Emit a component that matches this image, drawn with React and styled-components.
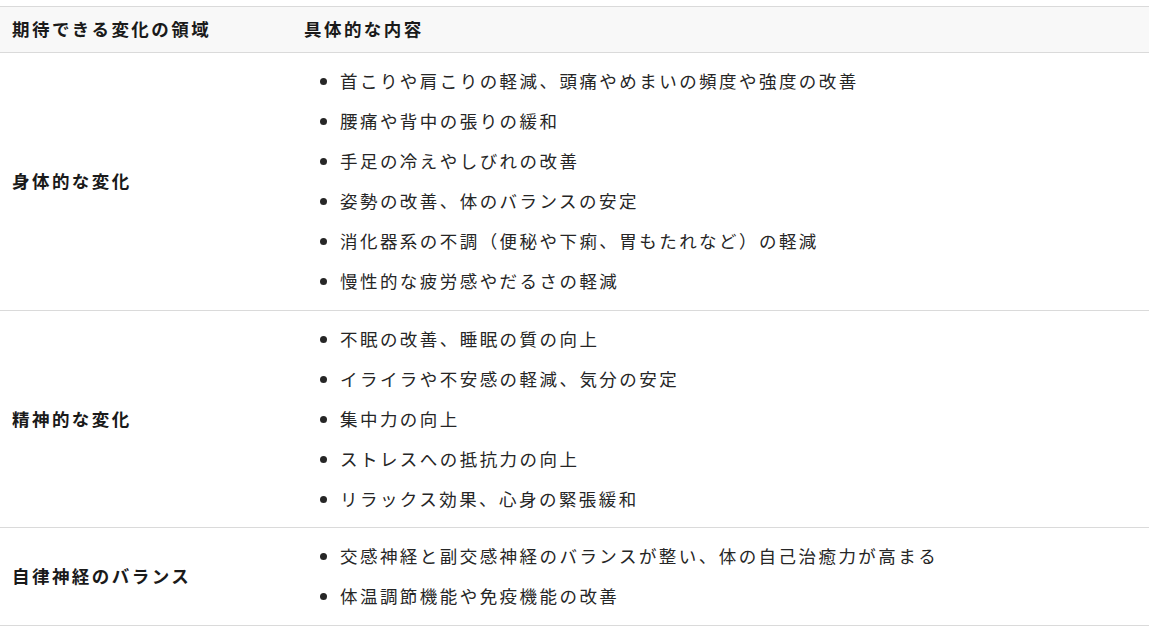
import React from "react";
import styled, { createGlobalStyle } from "styled-components";

const GlobalStyle = createGlobalStyle`
  html, body {
    margin: 0;
    padding: 0;
    background: #ffffff;
  }
  body {
    font-family: "Noto Sans CJK JP", "Noto Sans", sans-serif;
    color: #222;
  }
`;

const Wrapper = styled.div`
  padding-top: 6px;
`;

const Table = styled.table`
  width: 100%;
  border-collapse: collapse;
  font-size: 17.5px;
  letter-spacing: 2.45px;
  line-height: 24px;
`;

const HeadCell = styled.th`
  background: #f8f8f8;
  border-top: 1px solid #dadada;
  border-bottom: 1px solid #dadada;
  padding: 10px 12px 11px;
  text-align: left;
  font-weight: 700;
  color: #1a1a1a;
  width: ${({ $w }) => $w || "auto"};
`;

const Row = styled.tr`
  border-bottom: 1px solid #dadada;
`;

const AreaCell = styled.td`
  padding: 16px 12px;
  vertical-align: middle;
  font-weight: 700;
  color: #1a1a1a;
`;

const DetailCell = styled.td`
  padding: 16px 12px 16.5px;
  vertical-align: middle;
`;

const List = styled.ul`
  margin: 0;
  padding-left: 36px;
`;

const Item = styled.li`
  color: #262626;
  & + & {
    margin-top: 16px;
  }
`;

const rows = [
  {
    area: "身体的な変化",
    items: [
      "首こりや肩こりの軽減、頭痛やめまいの頻度や強度の改善",
      "腰痛や背中の張りの緩和",
      "手足の冷えやしびれの改善",
      "姿勢の改善、体のバランスの安定",
      "消化器系の不調（便秘や下痢、胃もたれなど）の軽減",
      "慢性的な疲労感やだるさの軽減",
    ],
  },
  {
    area: "精神的な変化",
    items: [
      "不眠の改善、睡眠の質の向上",
      "イライラや不安感の軽減、気分の安定",
      "集中力の向上",
      "ストレスへの抵抗力の向上",
      "リラックス効果、心身の緊張緩和",
    ],
  },
  {
    area: "自律神経のバランス",
    items: [
      "交感神経と副交感神経のバランスが整い、体の自己治癒力が高まる",
      "体温調節機能や免疫機能の改善",
    ],
  },
];

export default function App() {
  return (
    <Wrapper>
      <GlobalStyle />
      <Table>
        <thead>
          <tr>
            <HeadCell $w="268px">期待できる変化の領域</HeadCell>
            <HeadCell>具体的な内容</HeadCell>
          </tr>
        </thead>
        <tbody>
          {rows.map((row) => (
            <Row key={row.area}>
              <AreaCell>{row.area}</AreaCell>
              <DetailCell>
                <List>
                  {row.items.map((item) => (
                    <Item key={item}>{item}</Item>
                  ))}
                </List>
              </DetailCell>
            </Row>
          ))}
        </tbody>
      </Table>
    </Wrapper>
  );
}
